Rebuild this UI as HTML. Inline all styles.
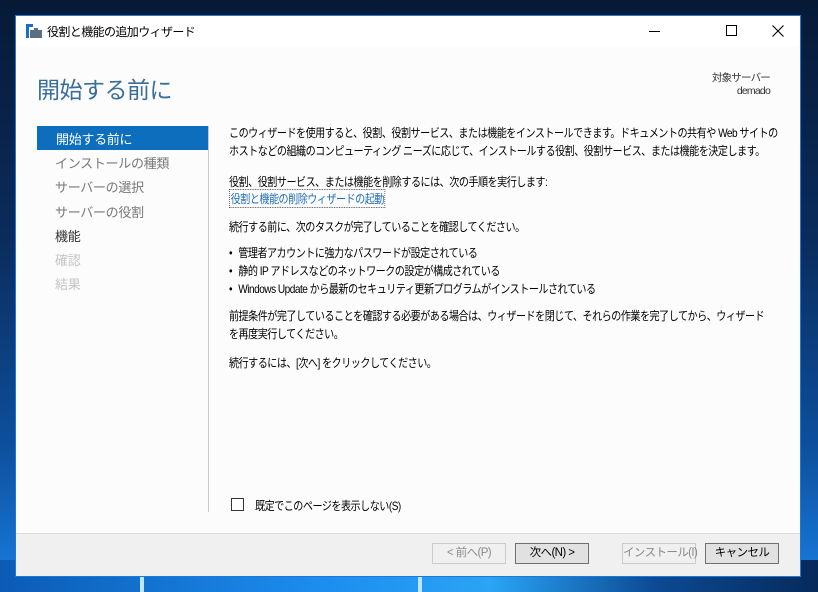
<!DOCTYPE html>
<html><head><meta charset="utf-8"><style>
*{margin:0;padding:0;box-sizing:border-box}
body{width:818px;height:592px;overflow:hidden;position:relative;font-family:"Liberation Sans","Noto Sans CJK JP",sans-serif;background:linear-gradient(180deg,#061a36 0%,#0a2c5c 40%,#0d4f9c 75%,#1a7ee0 100%)}
.abs{position:absolute}
.win{left:15px;top:15px;width:786px;height:562px;background:#fcfcfc;border:1px solid #1e7ad6;overflow:hidden}
.title{left:0;top:0;width:784px;height:31px;background:#fff}
.t{font-size:12px;color:#000;white-space:nowrap;letter-spacing:-0.6px}
.s{transform:scaleX(0.84);transform-origin:0 0}
.nav{font-size:13px;white-space:nowrap;letter-spacing:-0.3px}
.btn{height:21px;width:74px;border:1px solid #adadad;background:#e1e1e1;font-size:11.5px;text-align:center;line-height:19px;letter-spacing:-0.6px;white-space:nowrap}
.b{display:inline-block;width:11px}
</style></head><body>
<div class="abs" style="left:0;top:560px;width:818px;height:32px;background:linear-gradient(90deg,#0b5bb5,#1d8ef0 40%,#2aa4f5 60%,#0c4a94 80%,#062a5a)"></div>
<div class="abs" style="left:140px;top:577px;width:4px;height:15px;background:#bfe6ff"></div>
<div class="abs" style="left:418px;top:577px;width:4px;height:15px;background:#bfe6ff"></div>
<div class="abs win">
 <div class="abs title">
  <svg class="abs" style="left:10px;top:8px" width="16" height="14"><rect x="0" y="0" width="3" height="14" fill="#1a6fc4"/><rect x="0" y="0" width="7" height="3" fill="#1a6fc4"/><rect x="4" y="6" width="12" height="8" fill="#5a6e85"/><rect x="8" y="4" width="4" height="2" fill="#5a6e85"/></svg>
  <div class="abs t" style="left:31px;top:7px">役割と機能の追加ウィザード</div>
  <div class="abs" style="left:633px;top:15px;width:11px;height:1px;background:#000"></div>
  <div class="abs" style="left:710px;top:9px;width:11px;height:11px;border:1px solid #000"></div>
  <svg class="abs" style="left:756px;top:9px" width="12" height="12"><path d="M0.5 0.5L11.5 11.5M11.5 0.5L0.5 11.5" stroke="#000" stroke-width="1.1"/></svg>
 </div>
 <div class="abs" style="left:21px;top:55px;font-size:23px;color:#3a6d99;letter-spacing:-0.5px;white-space:nowrap">開始する前に</div>
 <div class="abs t" style="right:30px;top:56px;font-size:10.5px;color:#333;text-align:right;line-height:13px;letter-spacing:-0.8px">対象サーバー<br>demado</div>
 <div class="abs" style="left:21px;top:110px;width:171px;height:24px;background:#0c6ebd"></div>
 <div class="abs nav" style="left:40px;top:113px;color:#fff">開始する前に</div>
 <div class="abs nav" style="left:39px;top:137px;color:#777">インストールの種類</div>
 <div class="abs nav" style="left:39px;top:161px;color:#777">サーバーの選択</div>
 <div class="abs nav" style="left:39px;top:186px;color:#777">サーバーの役割</div>
 <div class="abs nav" style="left:39px;top:210px;color:#333">機能</div>
 <div class="abs nav" style="left:39px;top:234px;color:#c4c4c4">確認</div>
 <div class="abs nav" style="left:39px;top:258px;color:#c4c4c4">結果</div>
 <div class="abs" style="left:192px;top:110px;width:1px;height:386px;background:#c8c8c8"></div>
 <div class="abs t s" style="left:213px;top:108px;line-height:18px">このウィザードを使用すると、役割、役割サービス、または機能をインストールできます。ドキュメントの共有や Web サイトの<br>ホストなどの組織のコンピューティング ニーズに応じて、インストールする役割、役割サービス、または機能を決定します。</div>
 <div class="abs t s" style="left:213px;top:157px">役割、役割サービス、または機能を削除するには、次の手順を実行します:</div>
 <div class="abs t s" style="left:213px;top:173px;color:#1f6eb5;border:1px dotted #555;padding:0 1px">役割と機能の削除ウィザードの起動</div>
 <div class="abs t s" style="left:213px;top:202px">続行する前に、次のタスクが完了していることを確認してください。</div>
 <div class="abs t s" style="left:213px;top:228px;line-height:18px"><span class="b">•</span>管理者アカウントに強力なパスワードが設定されている<br><span class="b">•</span>静的 IP アドレスなどのネットワークの設定が構成されている<br><span class="b">•</span>Windows Update から最新のセキュリティ更新プログラムがインストールされている</div>
 <div class="abs t s" style="left:213px;top:291px;line-height:18px">前提条件が完了していることを確認する必要がある場合は、ウィザードを閉じて、それらの作業を完了してから、ウィザード<br>を再度実行してください。</div>
 <div class="abs t s" style="left:213px;top:338px">続行するには、[次へ] をクリックしてください。</div>
 <div class="abs" style="left:215px;top:482px;width:13px;height:13px;border:1px solid #333;background:#fff"></div>
 <div class="abs t s" style="left:239px;top:481px">既定でこのページを表示しない(S)</div>
 <div class="abs" style="left:0;top:517px;width:784px;height:43px;background:#f0f0f0;border-top:1px solid #dcdcdc"></div>
 <div class="abs btn" style="left:416px;top:527px;background:#f0f0f0;border-color:#ccc;color:#8a8a8a">&lt; 前へ(P)</div>
 <div class="abs btn" style="left:499px;top:527px;border-color:#707070">次へ(N) &gt;</div>
 <div class="abs btn" style="left:606px;top:527px;background:#f0f0f0;border-color:#ccc;color:#8a8a8a">インストール(I)</div>
 <div class="abs btn" style="left:689px;top:527px;border-color:#707070">キャンセル</div>
</div>
</body></html>
